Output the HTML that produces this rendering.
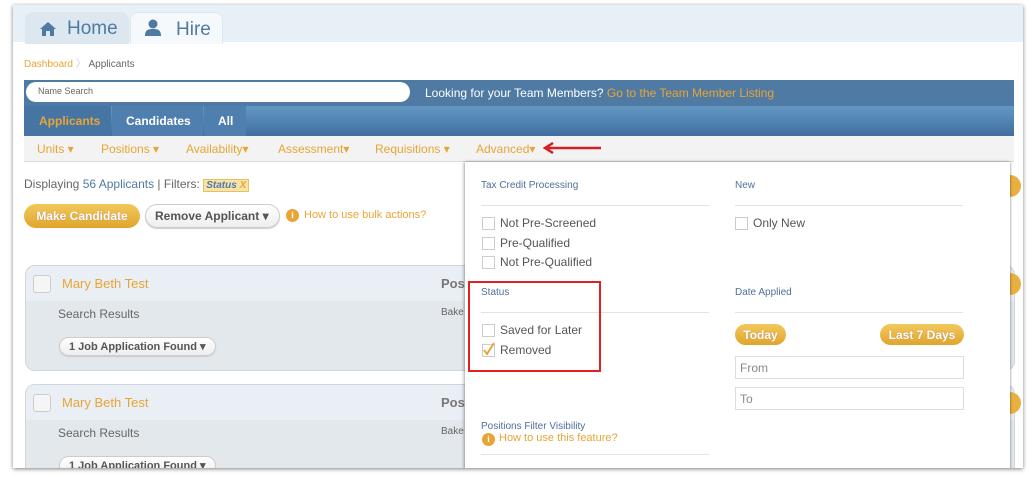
<!DOCTYPE html>
<html><head><style>
*{box-sizing:border-box;margin:0;padding:0}
body{width:1032px;height:477px;background:#fff;font-family:"Liberation Sans",sans-serif;position:relative;overflow:hidden}
.a{position:absolute}
.frame{left:13px;top:5px;width:1010px;height:463px;background:#fff;box-shadow:0 1px 4px rgba(0,0,0,.5);overflow:hidden}
.top{left:0;top:0;width:1010px;height:37px;background:#e8f0f7}
.tab{top:7px;height:32px;border-radius:8px 8px 0 0;font-size:19px;color:#4f7aa3;padding:6px 0 0 42px}
.org{color:#e8a535}
.gr{color:#666}
.cb{width:13px;height:13px;border:1px solid #ccc;background:#fff}
.lbl{font-size:12px;color:#555}
.hd{font-size:10px;color:#4f6f9a}
.line{height:1px;background:#e3e3e3}
.gold{background:linear-gradient(#f2c95b,#e0a52c);color:#fff;font-weight:bold;font-size:12px;border-radius:12px;text-align:center;text-shadow:0 0 1px #a77}
.card{left:12px;width:990px;border:1px solid #cfd6dd;border-radius:10px;background:#e3e8ed;overflow:hidden}
.card .h{height:35px;background:#e9eff5}
.pill{border:1px solid #ccc;border-radius:10px;background:linear-gradient(#fff,#eee);font-size:11px;font-weight:bold;color:#555;padding:2px 9px;box-shadow:0 1px 1px #ccc}
</style></head><body>
<div class="a frame">
 <div class="a top"></div>
 <div class="a tab" style="left:12px;width:104px;background:#dde7ef;color:#4f7aa3">Home</div>
 <svg class="a" style="left:27px;top:17px" width="16" height="14" viewBox="0 0 16 14"><path d="M8 0L0 7h2v7h4V9h4v5h4V7h2z" fill="#4f7aa3"/></svg>
 <div class="a tab" style="left:117px;width:93px;background:#f6f9fc;border:1px solid #dde7ef;border-bottom:none;padding-left:45px">Hire</div>
 <svg class="a" style="left:132px;top:14px" width="16" height="17" viewBox="0 0 16 17"><circle cx="8" cy="5" r="4.5" fill="#4f7aa3"/><path d="M0 17c0-6 3-7 8-7s8 1 8 7z" fill="#4f7aa3"/></svg>
 <div class="a" style="left:11px;top:50px;font-size:10px"><span class="org">Dashboard</span> <span style="color:#ccc">〉</span> <span class="gr">Applicants</span></div>
 <div class="a" style="left:11px;top:75px;width:990px;height:26px;background:#4f7aa3"></div>
 <div class="a" style="left:13px;top:77px;width:384px;height:20px;background:#fff;border-radius:10px;font-size:9px;color:#666;padding:4px 0 0 12px">Name Search</div>
 <div class="a" style="left:412px;top:81px;font-size:12px;color:#fff">Looking for your Team Members? <span class="org">Go to the Team Member Listing</span></div>
 <div class="a" style="left:11px;top:101px;width:990px;height:30px;background:linear-gradient(#6498c3,#3f6f9e)"></div>
 <div class="a" style="left:11px;top:101px;width:87px;height:30px;background:#4675a3;font-size:12px;font-weight:bold;padding:8px 0 0 15px"><span class="org">Applicants</span></div>
 <div class="a" style="left:99px;top:101px;width:91px;height:30px;background:#4e7fae;font-size:12px;font-weight:bold;color:#fff;padding:8px 0 0 14px">Candidates</div>
 <div class="a" style="left:191px;top:101px;width:42px;height:30px;background:#4e7fae;font-size:12px;font-weight:bold;color:#fff;padding:8px 0 0 14px">All</div>
 <div class="a" style="left:11px;top:131px;width:990px;height:26px;background:#f3f3f3;border-bottom:1px solid #ddd"></div>
 <div class="a org" style="left:24px;top:137px;font-size:12px">Units ▾</div>
 <div class="a org" style="left:88px;top:137px;font-size:12px">Positions ▾</div>
 <div class="a org" style="left:173px;top:137px;font-size:12px">Availability▾</div>
 <div class="a org" style="left:265px;top:137px;font-size:12px">Assessment▾</div>
 <div class="a org" style="left:362px;top:137px;font-size:12px">Requisitions ▾</div>
 <div class="a org" style="left:463px;top:137px;font-size:12px">Advanced▾</div>
 <svg class="a" style="left:528px;top:137px" width="62" height="12"><path d="M60 6H6M12 1L4 6l8 5" stroke="#d42020" stroke-width="2.5" fill="none"/></svg>
 <div class="a gr" style="left:11px;top:172px;font-size:12px">Displaying <span style="color:#4f7aa3">56 Applicants</span> | Filters: <span style="background:#f8e3a8;border:1px solid #e8c060;color:#4f7aa3;font-style:italic;font-weight:bold;font-size:10px;padding:0 2px">Status <span class="org">X</span></span></div>
 <div class="a gold" style="left:11px;top:199px;width:116px;height:24px;padding-top:5px">Make Candidate</div>
 <div class="a pill" style="left:132px;top:199px;width:135px;height:24px;border-radius:12px;font-size:12px;padding-top:4px">Remove Applicant ▾</div>
 <div class="a" style="left:273px;top:204px;width:13px;height:13px;border-radius:50%;background:#e8a535;color:#fff;font-size:9px;font-weight:bold;text-align:center;line-height:13px">i</div>
 <div class="a org" style="left:291px;top:204px;font-size:11px">How to use bulk actions?</div>
 <div class="a card" style="top:260px;height:106px"><div class="h"></div></div>
 <div class="a card" style="top:379px;height:106px"><div class="h"></div></div>
 <div class="a cb" style="left:20px;top:270px;width:18px;height:18px;border-radius:3px;background:#f5f5f5"></div>
 <div class="a org" style="left:49px;top:271px;font-size:13px">Mary Beth Test</div>
 <div class="a gr" style="left:45px;top:302px;font-size:12px">Search Results</div>
 <div class="a pill" style="left:46px;top:332px">1 Job Application Found ▾</div>
 <div class="a" style="left:428px;top:271px;font-size:13px;font-weight:bold;color:#777">Posi</div>
 <div class="a gr" style="left:428px;top:302px;font-size:10px">Bake</div>
 <div class="a cb" style="left:20px;top:389px;width:18px;height:18px;border-radius:3px;background:#f5f5f5"></div>
 <div class="a org" style="left:49px;top:390px;font-size:13px">Mary Beth Test</div>
 <div class="a gr" style="left:45px;top:421px;font-size:12px">Search Results</div>
 <div class="a pill" style="left:46px;top:451px">1 Job Application Found ▾</div>
 <div class="a" style="left:428px;top:390px;font-size:13px;font-weight:bold;color:#777">Posi</div>
 <div class="a gr" style="left:428px;top:421px;font-size:10px">Bake</div>
 <div class="a" style="left:986px;top:170px;width:22px;height:22px;border-radius:50%;background:#e8b040"></div>
 <div class="a" style="left:986px;top:268px;width:22px;height:22px;border-radius:50%;background:#e8b040"></div>
 <div class="a" style="left:986px;top:387px;width:22px;height:22px;border-radius:50%;background:#e8b040"></div>
 <!-- dropdown -->
 <div class="a" style="left:452px;top:157px;width:545px;height:310px;background:#fff;box-shadow:-1px 0 3px rgba(0,0,0,.35),1px 0 2px rgba(0,0,0,.2)"></div>
 <div class="a hd" style="left:468px;top:175px">Tax Credit Processing</div>
 <div class="a line" style="left:468px;top:200px;width:228px"></div>
 <div class="a hd" style="left:722px;top:175px">New</div>
 <div class="a line" style="left:722px;top:200px;width:228px"></div>
 <div class="a cb" style="left:469px;top:212px"></div><div class="a lbl" style="left:487px;top:211px">Not Pre-Screened</div>
 <div class="a cb" style="left:469px;top:232px"></div><div class="a lbl" style="left:487px;top:231px">Pre-Qualified</div>
 <div class="a cb" style="left:469px;top:251px"></div><div class="a lbl" style="left:487px;top:250px">Not Pre-Qualified</div>
 <div class="a cb" style="left:722px;top:212px"></div><div class="a lbl" style="left:740px;top:211px">Only New</div>
 <div class="a hd" style="left:468px;top:282px">Status</div>
 <div class="a line" style="left:468px;top:307px;width:228px"></div>
 <div class="a hd" style="left:722px;top:282px">Date Applied</div>
 <div class="a line" style="left:722px;top:307px;width:228px"></div>
 <div class="a cb" style="left:469px;top:319px"></div><div class="a lbl" style="left:487px;top:318px">Saved for Later</div>
 <div class="a cb" style="left:469px;top:339px"></div><div class="a lbl" style="left:487px;top:338px">Removed</div>
 <svg class="a" style="left:469px;top:337px" width="14" height="14"><path d="M2 8l3 4 7-11" stroke="#e8a535" stroke-width="2" fill="none"/></svg>
 <div class="a" style="left:455px;top:276px;width:133px;height:91px;border:2px solid #e02020"></div>
 <div class="a gold" style="left:722px;top:319px;width:51px;height:21px;padding-top:4px">Today</div>
 <div class="a gold" style="left:867px;top:319px;width:84px;height:21px;padding-top:4px">Last 7 Days</div>
 <div class="a" style="left:722px;top:351px;width:229px;height:23px;border:1px solid #ddd;font-size:12px;color:#888;padding:4px 0 0 4px">From</div>
 <div class="a" style="left:722px;top:382px;width:229px;height:23px;border:1px solid #ddd;font-size:12px;color:#888;padding:4px 0 0 4px">To</div>
 <div class="a hd" style="left:468px;top:416px">Positions Filter Visibility</div>
 <div class="a" style="left:469px;top:428px;width:13px;height:13px;border-radius:50%;background:#e8a535;color:#fff;font-size:9px;font-weight:bold;text-align:center;line-height:13px">i</div>
 <div class="a org" style="left:486px;top:427px;font-size:11px">How to use this feature?</div>
 <div class="a line" style="left:468px;top:449px;width:228px"></div>
</div>
</body></html>
